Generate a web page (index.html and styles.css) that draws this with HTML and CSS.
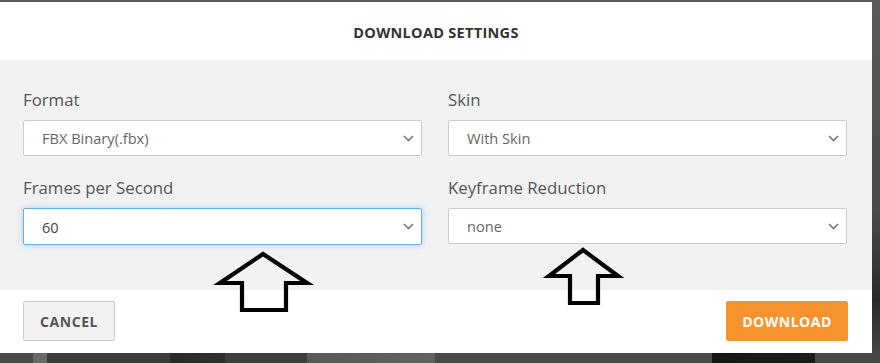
FILE: index.html
```html
<!DOCTYPE html>
<html>
<head>
<meta charset="utf-8">
<link rel="stylesheet" href="styles.css">
</head>
<body>
<div class="page">
  <div class="dialog">
    <div class="header">DOWNLOAD SETTINGS</div>
    <div class="body">
      <div class="field">
        <div class="label">Format</div>
        <div class="select"><span>FBX Binary(.fbx)</span><svg class="chev" width="11" height="7" viewBox="0 0 11 7"><path d="M1 1 L5.5 5.5 L10 1" fill="none" stroke="#666" stroke-width="1.3"/></svg></div>
      </div>
      <div class="field">
        <div class="label">Skin</div>
        <div class="select"><span>With Skin</span><svg class="chev" width="11" height="7" viewBox="0 0 11 7"><path d="M1 1 L5.5 5.5 L10 1" fill="none" stroke="#666" stroke-width="1.3"/></svg></div>
      </div>
      <div class="field">
        <div class="label">Frames per Second</div>
        <div class="select focus"><span class="dark">60</span><svg class="chev" width="11" height="7" viewBox="0 0 11 7"><path d="M1 1 L5.5 5.5 L10 1" fill="none" stroke="#666" stroke-width="1.3"/></svg></div>
      </div>
      <div class="field">
        <div class="label">Keyframe Reduction</div>
        <div class="select"><span>none</span><svg class="chev" width="11" height="7" viewBox="0 0 11 7"><path d="M1 1 L5.5 5.5 L10 1" fill="none" stroke="#666" stroke-width="1.3"/></svg></div>
      </div>
    </div>
    <div class="footer">
      <button class="btn cancel">CANCEL</button>
      <button class="btn download">DOWNLOAD</button>
    </div>
  </div>
  <div class="rightstrip"></div>
</div>
<svg class="arrows" width="880" height="363" viewBox="0 0 880 363">
  <polygon points="263,254 307,283 286,283 286,310 242,310 242,283 220,283" fill="none" stroke="#000" stroke-width="4.2" stroke-linejoin="miter"/>
  <polygon points="583,250 618,276 598,276 598,303 570,303 570,276 549,276" fill="none" stroke="#000" stroke-width="4.2" stroke-linejoin="miter"/>
</svg>
</body>
</html>
```

FILE: styles.css
```css
html, body {
  margin: 0;
  padding: 0;
}
body {
  width: 880px;
  height: 363px;
  overflow: hidden;
  position: relative;
  background: linear-gradient(90deg,
    #4a4a4a 0, #4a4a4a 33px,
    #6a6a6a 33px, #6a6a6a 47px,
    #3c3c3c 47px, #3c3c3c 170px,
    #2a2a2a 170px, #2f2f2f 225px,
    #3e3e3e 225px, #3e3e3e 307px,
    #585858 307px, #626262 435px,
    #4a4a4a 435px, #4a4a4a 712px,
    #161616 712px, #1c1c1c 815px,
    #474747 815px, #474747 880px);
  font-family: "Open Sans", "Liberation Sans", sans-serif;
}
.page {
  display: flex;
  padding-top: 2px;
  background: linear-gradient(#5a5a5a, #5a5a5a) top / 100% 2px no-repeat;
}
.dialog {
  width: 872px;
  background: #fff;
  display: flex;
  flex-direction: column;
}
.rightstrip {
  flex: 1;
  height: 350px;
  background: linear-gradient(180deg, #5a5a5a 0%, #4a4a4a 60%, #2a2a2a 85%, #444 100%);
}
.header {
  height: 58px;
  display: flex;
  align-items: center;
  justify-content: center;
  font-weight: 700;
  font-size: 14.5px;
  color: #333;
  letter-spacing: 0.3px;
  padding-top: 2px;
  box-sizing: border-box;
}
.body {
  background: #f2f2f2;
  display: grid;
  grid-template-columns: 399px 399px;
  column-gap: 26px;
  row-gap: 21px;
  padding: 29px 25px 45px 23px;
}
.label {
  font-size: 16.8px;
  line-height: 22px;
  color: #555;
  margin-bottom: 9px;
}
.select {
  height: 36px;
  box-sizing: border-box;
  border: 1px solid #ccc;
  border-radius: 2px;
  background: #fff;
  display: flex;
  align-items: center;
  justify-content: space-between;
  padding: 0 7px 0 18px;
  font-size: 14.6px;
  color: #666;
}
.select.focus {
  border-color: #66afe9;
  box-shadow: 0 0 6px rgba(102, 175, 233, 0.55);
  height: 37px;
}
.select .dark {
  color: #444;
}
.footer {
  height: 63px;
  box-sizing: border-box;
  display: flex;
  justify-content: space-between;
  align-items: flex-start;
  padding: 11px 24px 0 23px;
}
.btn {
  height: 40px;
  border-radius: 2px;
  font-family: "Open Sans", "Liberation Sans", sans-serif;
  font-weight: 700;
  font-size: 14px;
  cursor: pointer;
  padding: 0;
}
.cancel {
  width: 92px;
  background: #f2f2f2;
  border: 1px solid #ccc;
  color: #555;
  letter-spacing: 0.6px;
}
.download {
  width: 122px;
  background: #f7932f;
  border: 1px solid #f7932f;
  color: #fff;
  letter-spacing: 0.5px;
}
.arrows {
  position: absolute;
  left: 0;
  top: 0;
  pointer-events: none;
}
```
